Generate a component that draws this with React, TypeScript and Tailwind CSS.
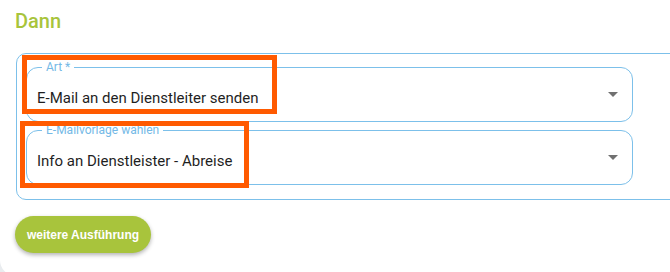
export default function App() {
  return (
    <div className="h-[272px] w-[670px] overflow-hidden bg-[#e9ecef]">
      <div className="relative h-[276px] w-[670px] rounded-bl-[16px] bg-white" style={{ fontFamily: "Roboto, sans-serif" }}>
        <h2 className="pl-[15px] pt-[9px] text-[20px] font-medium leading-[24px] text-[#a8c43c]">Dann</h2>

        <div className="ml-[16px] mt-[20px] w-[680px] rounded-l-[10px] border border-[#7cc0ea] pb-[14px] pl-[9px] pt-[6px]">
          <div className="flex w-[607px] flex-col gap-[1px]">
            <SelectField label="Art *" value="E-Mail an den Dienstleiter senden" />
            <SelectField label="E-Mailvorlage wählen" value="Info an Dienstleister - Abreise" />
          </div>
        </div>

        <button
          className="ml-[15px] mt-[16px] h-[37px] w-[136px] rounded-full bg-[#a8c43c] text-[12px] font-bold text-white shadow-[0_2px_4px_rgba(0,0,0,0.3)]"
          style={{ fontFamily: '"Liberation Sans", Arial, sans-serif' }}
        >
          weitere Ausführung
        </button>

        {/* annotation boxes */}
        <div className="pointer-events-none absolute left-[22px] top-[55px] h-[59px] w-[255px] border-[5px] border-[#ff5a00]" />
        <div className="pointer-events-none absolute left-[20px] top-[121px] h-[67px] w-[229px] border-[5px] border-[#ff5a00]" />
      </div>
    </div>
  );
}

function SelectField({ label, value }: { label: string; value: string }) {
  return (
    <fieldset className="relative h-[62px] rounded-[12px] border border-[#7cc0ea] pl-[10px]">
      <legend className="ml-[5px] px-[4px] text-[12px] leading-[14px] text-[#74b9e6]">{label}</legend>
      <div className="pt-[15px] text-[15px] leading-[18px] text-[#1f1f1f]">{value}</div>
      <svg className="absolute right-[14px] top-[18px]" width="10" height="5" viewBox="0 0 10 5">
        <path d="M0 0h10L5 5z" fill="#707070" />
      </svg>
    </fieldset>
  );
}
